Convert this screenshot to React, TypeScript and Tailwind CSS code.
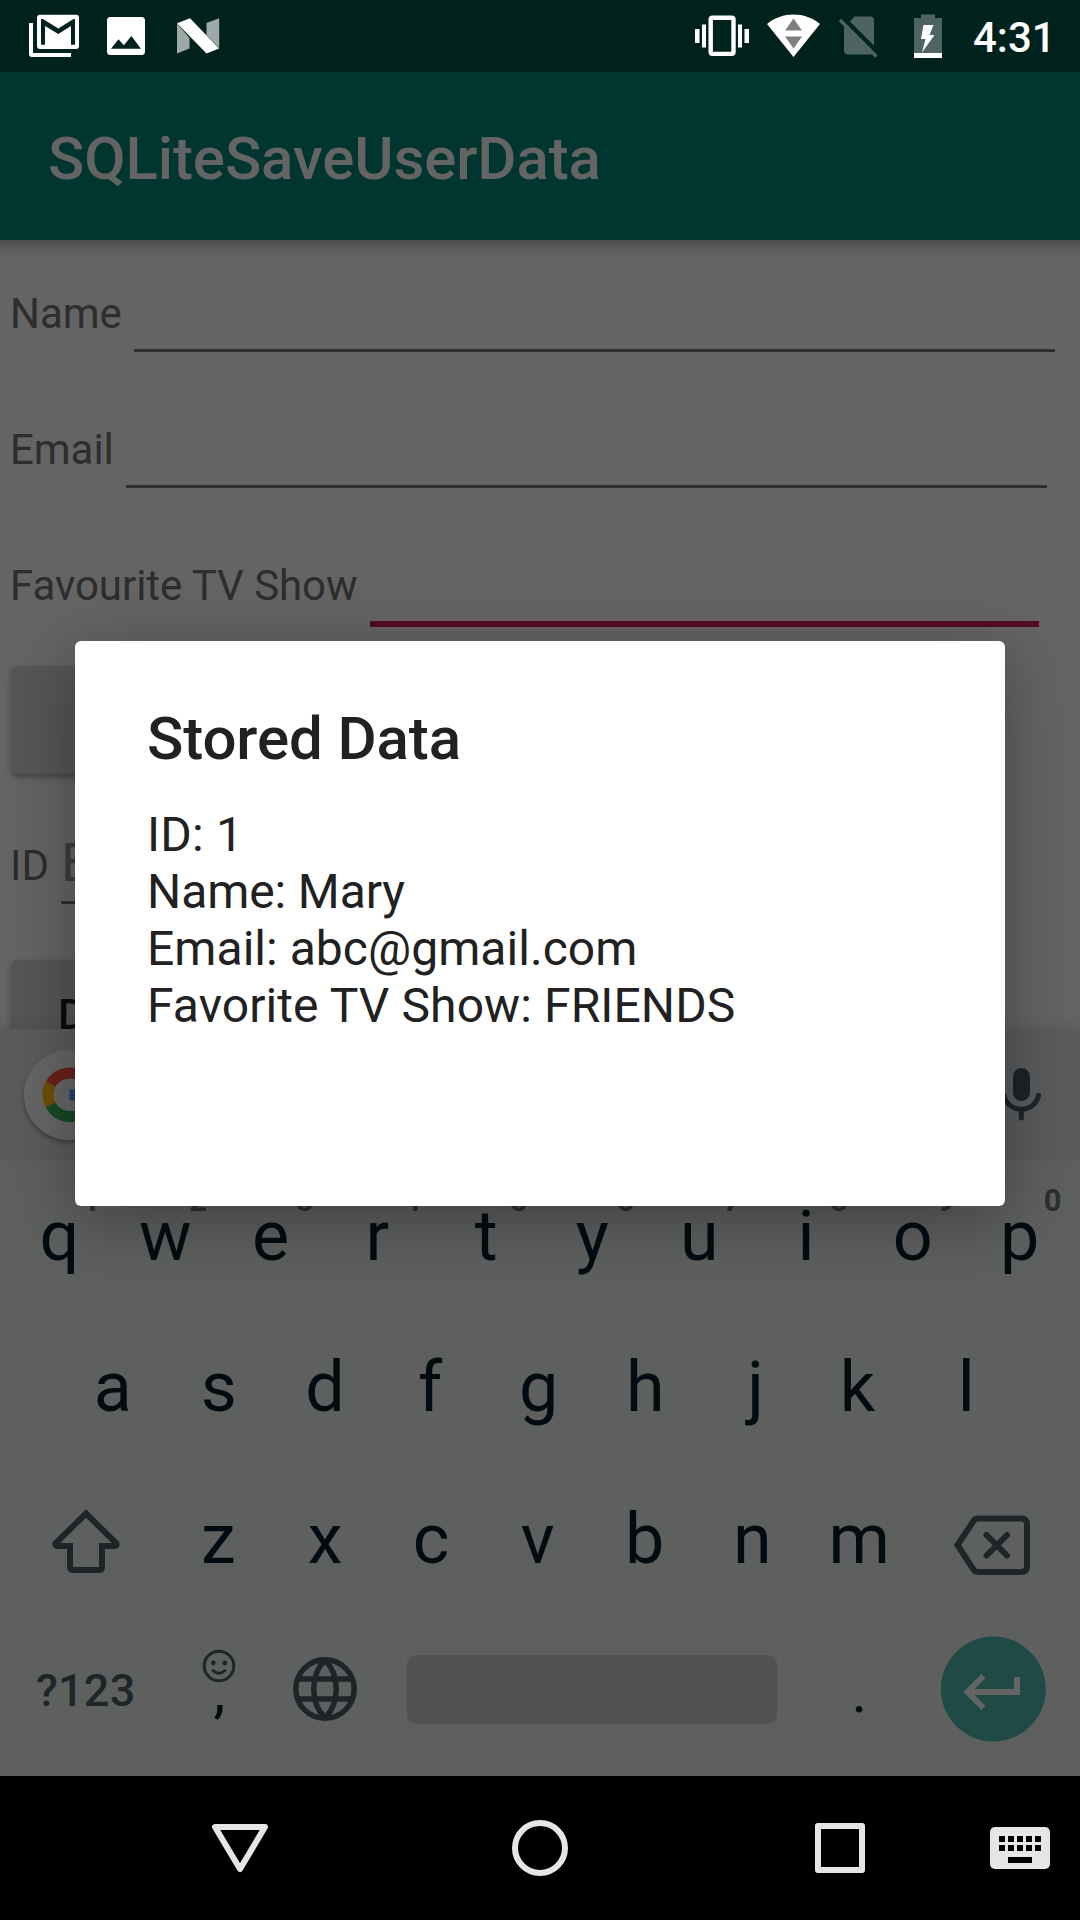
import React from "react";

const TOP = ["q", "w", "e", "r", "t", "y", "u", "i", "o", "p"];
const HOME = ["a", "s", "d", "f", "g", "h", "j", "k", "l"];
const BOTTOM = ["z", "x", "c", "v", "b", "n", "m"];

const OPTICAL: Record<string, number> = { q: 2, e: -3, r: -3, t: 1, a: 3, s: 1, f: -3, j: 7, k: -3, l: 1, c: -2, v: -2, b: -2 };

function StatusBar() {
  return (
    <div className="flex h-[72px] shrink-0 items-start justify-between bg-[#00221d]">
      <div className="flex">
        <svg className="ml-6 h-[72px] w-[60px]" viewBox="24 0 60 72">
          <path d="M29 23h4v30h38v4H32a3 3 0 0 1-3-3z" fill="#fff" />
          <path fillRule="evenodd" d="M40 14.700h36a3 3 0 0 1 3 3v28.300a3 3 0 0 1-3 3H40a3 3 0 0 1-3-3V17.700a3 3 0 0 1 3-3zM41 19v25.700h4V26l13.300 8L71 26v18.700h4V19h-1.500L58.300 28.500 43 19z" fill="#fff" />
        </svg>
        <svg className="ml-4 h-[72px] w-[50px]" viewBox="100 0 50 72">
          <path fillRule="evenodd" d="M110.500 17h31a3.500 3.500 0 0 1 3.500 3.500v31a3.500 3.500 0 0 1-3.500 3.500h-31a3.500 3.500 0 0 1-3.500-3.500v-31a3.500 3.500 0 0 1 3.500-3.500zM111 48.700h30L131.400 36l-7.600 9.300-5.300-6z" fill="#fff" />
        </svg>
        <svg className="ml-5 h-[72px] w-[60px]" viewBox="170 0 60 72">
          <path d="M177 23.500L189.500 38v10.500L177 53.500zM219.200 18.300L206.500 23v12l12.700 13z" fill="#9eaaa8" />
          <path d="M177 23.300L190 18.300 219.200 48.500 206.500 53.500z" fill="#fff" />
        </svg>
      </div>
      <div className="flex">
        <svg className="h-[72px] w-[60px]" viewBox="692 0 60 72">
          <path d="M695 29h4.500v14H695zM702 24.500h4v23h-4zM738 24.500h4v23h-4zM744.500 29h4.500v14h-4.500z" fill="#fff" />
          <rect x="710.700" y="17.700" width="22.800" height="36.200" rx="1.800" fill="none" stroke="#fff" strokeWidth="4.400" />
        </svg>
        <svg className="ml-3 h-[72px] w-[60px]" viewBox="764 0 60 72">
          <path d="M767 24C782 11.300 805 11.300 820 24L793.500 57z" fill="#fff" />
          <path d="M793.500 18.500l8.500 12h-17zM793.500 48.500l8.500-12h-17z" fill="#7f7f7f" />
        </svg>
        <svg className="ml-2 h-[72px] w-[56px]" viewBox="832 0 56 72">
          <path d="M854.500 16.500H870a4 4 0 0 1 4 4V45.500L850 21.500zM844 25.500L873 54.500H848a4 4 0 0 1-4-4z" fill="#4d6461" />
          <path d="M840 20L876.500 56.500" stroke="#4d6461" strokeWidth="3.400" />
        </svg>
        <svg className="ml-4 h-[72px] w-[48px]" viewBox="904 0 48 72">
          <path d="M921 14.500h14v3.500h7v35H914V18h7z" fill="#4d6461" />
          <path d="M914 53h28v5H914z" fill="#fff" />
          <path d="M923.500 25h10l-4 10h5l-12.500 17.500L925.500 39H921z" fill="#fff" />
        </svg>
        <span className="mt-3 mr-[26px] ml-[21px] w-[81px] whitespace-nowrap text-[42px] leading-[52px] font-medium text-white">4:31</span>
      </div>
    </div>
  );
}

function Field({ label, line, focused }: { label: string; line: string; focused?: boolean }) {
  return (
    <div className="flex h-[136px]">
      <span className="mt-[49px] ml-[10px] h-[50px] tracking-[-0.05px] whitespace-nowrap text-[42px] leading-[50px] text-[#2d2d2d]">{label}</span>
      <div className={line}>
        <div className={focused ? "h-[6px] bg-[#550a28]" : "h-[3px] bg-[#2d2f2e]"} />
      </div>
    </div>
  );
}

function Form() {
  return (
    <div className="h-[789px] shrink-0 overflow-hidden bg-[#646464] bg-[linear-gradient(to_bottom,#4c4c4c_0px,#5a5a5a_7px,#616161_14px,#646464_24px)]">
      <div className="grid grid-cols-1">
        <Field label="Name" line="mt-[109px] ml-auto mr-[25px] w-[921px]" />
        <Field label="Email" line="mt-[109px] ml-auto mr-[33px] w-[921px]" />
        <Field label="Favourite TV Show" line="mt-[109px] ml-auto mr-[41px] w-[669px]" focused />
      </div>
      <div className="mt-[18px] ml-[12px] h-[108px] w-[400px] rounded-[6px] bg-[#565656] shadow-[0_3px_6px_rgba(0,0,0,0.35)]" />
      <div className="flex h-[186px]">
        <span className="mt-[67px] ml-[10px] h-[50px] text-[42px] leading-[50px] text-[#2d2d2d]">ID</span>
        <div className="mt-[57px] ml-[12px] h-[73px] w-[400px] border-b-[3px] border-[#2d2f2e] text-[54px] leading-[63px] text-[#3d3d3d]">
          E
        </div>
      </div>
      <div className="ml-[12px] flex h-[108px] w-[400px] rounded-[6px] bg-[#565656] pl-[46px] text-[42px] leading-[110px] font-medium text-[#0c0c0c] shadow-[0_3px_6px_rgba(0,0,0,0.35)]">
        D
      </div>
    </div>
  );
}

function Key({ label, hint }: { label: string; hint?: string }) {
  return (
    <div className="relative w-[106.800px] text-center text-[70px] leading-[82px] text-[#020c10]">
      <div style={{ textIndent: OPTICAL[label] ?? 0 }}>{label}</div>
      {hint && <span className="absolute top-[-12px] left-[76.400px] w-[20px] text-center text-[31px] leading-[36px] font-bold text-[#2a2f31]">{hint}</span>}
    </div>
  );
}

function Keyboard() {
  return (
    <div className="h-[747px] shrink-0 bg-[#5e605f] shadow-[0_-3px_12px_rgba(0,0,0,0.1)]">
      <div className="flex h-[132px] items-start justify-between bg-[#5a5b5d]">
        <div className="mt-[21px] ml-[24px] flex h-[90px] w-[90px] items-center justify-center rounded-full bg-[#666] shadow-[0_3px_4px_rgba(0,0,0,0.3)]">
          <svg className="h-[56px] w-[56px]" viewBox="-28.500 -28 56 56" fill="none" strokeWidth="11">
            <path d="M-18.800 -11A21.800 21.800 0 0 1 16 -15" stroke="#6b1f1a" />
            <path d="M-18.800 10A21.800 21.800 0 0 1 -18.800 -11" stroke="#6a5000" />
            <path d="M15 16A21.800 21.800 0 0 1 -18.800 10" stroke="#154a24" />
            <path d="M0 0H21.800A21.800 21.800 0 0 1 15 16" stroke="#243f70" />
          </svg>
        </div>
        <svg className="mt-[30px] mr-[33px] h-[70px] w-[52px]" viewBox="995 1059 52 70">
          <rect x="1013" y="1068" width="17" height="33" rx="8.500" fill="#1c2427" />
          <path d="M1004 1095.500A17.500 16.500 0 0 0 1038.500 1095.500M1021.300 1110v8" fill="none" stroke="#1c2427" strokeWidth="5" strokeLinecap="round" />
        </svg>
      </div>
      <div className="mt-[34px] ml-[5px] flex h-[151px]">
        {TOP.map((k, i) => <Key key={k} label={k} hint={String((i + 1) % 10)} />)}
      </div>
      <div className="ml-[58px] flex h-[152px]">
        {HOME.map((k) => <Key key={k} label={k} />)}
      </div>
      <div className="flex h-[141px]">
        <svg className="ml-[46px] h-[90px] w-[80px]" viewBox="46 1498 80 90">
          <path d="M86 1513.500L55.500 1543.500Q55 1546 57.500 1546H70V1567Q70 1570 73 1570H99Q102 1570 102 1567V1546H114.500Q117 1546 116.500 1543.500Z" fill="none" stroke="#1e2528" strokeWidth="6" />
        </svg>
        <div className="ml-[39px] flex">
          {BOTTOM.map((k) => <Key key={k} label={k} />)}
        </div>
        <svg className="ml-[31px] h-[90px] w-[96px]" viewBox="944 1498 96 90">
          <path d="M957.500 1545L973.500 1521Q975 1518.500 978 1518.500H1021Q1027 1518.500 1027 1524.500V1566Q1027 1572 1021 1572H978Q975 1572 973.500 1569.500Z" fill="none" stroke="#1e2528" strokeWidth="6" />
          <path d="M986.500 1535L1007 1555.500M1007 1535L986.500 1555.500" stroke="#1e2528" strokeWidth="6" strokeLinecap="round" />
        </svg>
      </div>
      <div className="flex h-[110px] items-start">
        <span className="mt-[25px] ml-[36px] w-[129px] tracking-[0.2px] text-[45px] leading-[54px] font-medium text-[#1e2528]">?123</span>
        <div className="flex w-[107px] flex-col items-center">
          <svg className="mt-[9px] h-[36px] w-[36px]" viewBox="-18 -18 36 36">
            <circle r="14.800" fill="none" stroke="#1e2528" strokeWidth="3" />
            <circle cx="-5.700" cy="-3" r="2.400" fill="#1e2528" />
            <circle cx="5.700" cy="-3" r="2.400" fill="#1e2528" />
            <path d="M-6 4.500Q0 10 6 4.500" fill="none" stroke="#1e2528" strokeWidth="3" strokeLinecap="round" />
          </svg>
          <span className="mt-[-28px] ml-[2px] text-[60px] leading-[70px] text-[#020c10]">,</span>
        </div>
        <svg className="mt-[14px] ml-[17px] h-[72px] w-[72px]" viewBox="-36 -36 72 72" fill="none" stroke="#1e2528" strokeWidth="5.500">
          <circle r="29.200" />
          <path d="M-27 -10H27M-27 10H27M0 -29C-15 -14 -15 14 0 29M0 -29C15 -14 15 14 0 29" />
        </svg>
        <div className="mt-[16px] ml-[46px] h-[69px] w-[370px] rounded-[9px] bg-[#515153]" />
        <span className="mt-[18px] ml-[29px] w-[107px] text-center text-[60px] leading-[70px] text-[#020c10]">.</span>
        <div className="mt-[-3px] ml-[27px] h-[106px] w-[106px]">
          <svg className="h-[106px] w-[106px]" viewBox="940 1636 106 106">
            <circle cx="993.300" cy="1689" r="52.500" fill="#204a45" />
            <path d="M1017 1677V1692H967M983.500 1676L967.500 1692L983.500 1708" fill="none" stroke="#646464" strokeWidth="6" />
          </svg>
        </div>
      </div>
    </div>
  );
}

function NavBar() {
  return (
    <div className="flex h-[144px] shrink-0 items-center bg-black">
      <svg className="ml-[204px] h-[72px] w-[72px]" viewBox="204 1812 72 72">
        <path d="M215 1827H265L240 1869Z" fill="none" stroke="#e6e6e6" strokeWidth="6" strokeLinejoin="round" />
      </svg>
      <svg className="ml-[228px] h-[72px] w-[72px]" viewBox="504 1812 72 72">
        <circle cx="540" cy="1848" r="25" fill="none" stroke="#e6e6e6" strokeWidth="6" />
      </svg>
      <svg className="ml-[228px] h-[72px] w-[72px]" viewBox="804 1812 72 72">
        <rect x="818" y="1826" width="44" height="44" fill="none" stroke="#e6e6e6" strokeWidth="6" strokeLinejoin="round" />
      </svg>
      <svg className="ml-[108px] h-[72px] w-[72px]" viewBox="984 1812 72 72">
        <rect x="990" y="1827" width="60" height="42" rx="5" fill="#e6e6e6" />
        <path d="M999 1839H1041M999 1848H1041" stroke="#000" strokeWidth="6" strokeDasharray="6 3" />
        <path d="M1008 1860H1032" stroke="#000" strokeWidth="6" />
      </svg>
    </div>
  );
}

export default function App() {
  return (
    <div className="relative flex h-[1920px] w-[1080px] flex-col overflow-hidden bg-black font-['Roboto',sans-serif]">
      <StatusBar />
      <header className="h-[168px] shrink-0 bg-[#003530] pt-[52px] pl-[48px] text-[60px] leading-[70px] font-medium tracking-[-0.1px] text-[#646464]">SQLiteSaveUserData</header>
      <Form />
      <Keyboard />
      <NavBar />
      <div className="absolute top-[641px] left-[75px] h-[565px] w-[930px] rounded-[6px] bg-white pt-[62px] pl-[72px] text-[#212121] shadow-[0_15px_66px_rgba(0,0,0,0.32)]">
        <h1 className="text-[60px] leading-[72px] font-medium tracking-[-0.1px]">Stored Data</h1>
        <div className="mt-[31px] text-[48px] leading-[57px]">
          <p className="tracking-[0.2px]">ID: 1</p>
          <p className="tracking-[-0.1px]">Name: Mary</p>
          <p className="tracking-[0.05px]">Email: abc@gmail.com</p>
          <p className="tracking-[0.1px]">Favorite TV Show: FRIENDS</p>
        </div>
      </div>
    </div>
  );
}
